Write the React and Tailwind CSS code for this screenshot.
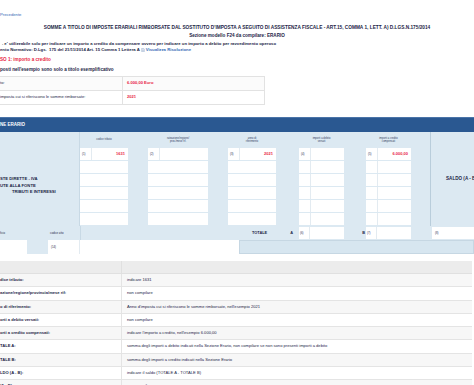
import React from "react";

const navy = "text-[#1d2547]";

// one white column of the Erario grid: header + 6 rows
const EntryCol = ({ width, head, num, value, split }) => (
  <div className={`${width} flex flex-col`}>
    <div className="h-[16px] flex items-center justify-center text-center text-[2.6px] leading-[3.2px] text-[#33405e]">
      {head}
    </div>
    {[0, 1, 2, 3, 4, 5].map((i) => (
      <div key={i} className="h-[13px] bg-white border-b border-[#dce9f2] flex">
        {(i === 0 || split) && (
          <div className="w-[12px] border-r border-[#e3ebf1] flex items-center pl-[2px] text-[2.8px]">
            {i === 0 ? num : ""}
          </div>
        )}
        <div className="flex-1 flex items-center justify-end pr-[3px] text-[4px] font-bold text-[#e8243f]">
          {i === 0 ? value : ""}
        </div>
      </div>
    ))}
  </div>
);

const Gap = ({ width }) => <div className={`${width} h-[94px]`} />;

const legend = [
  ["dice tributo:", "indicare 1631"],
  ["azione/regione/provincia/mese rif:", "non compilare"],
  ["o di riferimento:", "Anno d'imposta cui si riferiscono le somme rimborsate, nell'esempio 2021"],
  ["orti a debito versati:", "non compilare"],
  ["orti a credito compensati:", "indicare l'importo a credito, nell'esempio 6.000,00"],
  ["TALE A:", "somma degli importi a debito indicati nella Sezione Erario, non compilare se non sono presenti importi a debito"],
  ["TALE B:", "somma degli importi a credito indicati nella Sezione Erario"],
  ["LDO (A - B):", "indicare il saldo (TOTALE A - TOTALE B)"],
  ["(A - B):", "non compilare"],
];

export default function App() {
  return (
    <div className={`w-[474px] h-[385px] overflow-hidden bg-white font-['Liberation_Sans',Arial,sans-serif] ${navy}`}>
      {/* top links and titles */}
      <div className="pt-[12px] h-[18px] leading-[6px] text-[4.2px] text-[#3569b5]">Precedente</div>
      <div className="mt-[7px] h-[6px] leading-[6px] text-center text-[4.75px] font-bold whitespace-nowrap">
        SOMME A TITOLO DI IMPOSTE ERARIALI RIMBORSATE DAL SOSTITUTO D'IMPOSTA A SEGUITO DI ASSISTENZA FISCALE - ART.15, COMMA 1, LETT. A) D.LGS.N.175/2014
      </div>
      <div className="mt-[2px] h-[6px] leading-[6px] text-center text-[4.6px] font-bold">
        Sezione modello F24 da compilare: ERARIO
      </div>
      <div className="mt-[2px] h-[6px] leading-[6px] pl-[2px] text-[4.25px] font-bold whitespace-nowrap">
        . e' utilizzabile solo per indicare un importo a credito da compensare ovvero per indicare un importo a debito per ravvedimento operoso
      </div>
      <div className="h-[6px] leading-[6px] text-[4.25px] font-bold whitespace-nowrap flex items-center">
        <span>ento Normativo: D.Lgs.&nbsp; 175 del 21/11/2014 Art. 15 Comma 1 Lettera A</span>
        <svg viewBox="0 0 8 8" className="w-[4px] h-[4px] mx-[1px]">
          <path d="M1.5 .5h3.5l1.5 1.5v5.5h-5z" fill="#fff" stroke="#5b7fae" strokeWidth=".8" />
          <path d="M2.5 3.5h3M2.5 5h3" stroke="#5b7fae" strokeWidth=".6" />
        </svg>
        <span className="text-[#3569b5]">Visualizza Risoluzione</span>
      </div>
      <div className="mt-[4px] h-[6px] leading-[6px] text-[4.6px] font-bold text-[#e8243f]">
        SO 1: importo a credito
      </div>
      <div className="mt-[4px] h-[6px] leading-[6px] text-[4.6px] font-bold">
        posti nell'esempio sono solo a titolo esemplificativo
      </div>

      {/* example values */}
      <div className="mt-[3px] w-[265px] border-t border-r border-[#e2e2e2] text-[4.1px]">
        <div className="h-[14px] flex border-b border-[#e2e2e2] bg-[#fbfbfb]">
          <div className="w-[123px] border-r border-[#e2e2e2] flex items-center">to:</div>
          <div className="flex-1 flex items-center pl-[4px] font-bold text-[#e8243f]">6.000,00 Euro</div>
        </div>
        <div className="h-[14px] flex border-b border-[#e2e2e2]">
          <div className="w-[123px] border-r border-[#e2e2e2] flex items-center">imposta cui si riferiscono le somme rimborsate:</div>
          <div className="flex-1 flex items-center pl-[4px] font-bold text-[#e8243f]">2021</div>
        </div>
      </div>

      {/* sezione erario */}
      <div className="mt-[12px] h-[15px] bg-[#2a5891] border-t border-[#4a74a8] flex items-center text-[4.5px] font-bold text-white">
        NE ERARIO
      </div>
      <div className="bg-[#dce9f2]">
        <div className="flex">
          <div className="w-[80px] h-[94px] border-r border-[#c8d9e5] flex flex-col justify-center pt-[14px] text-[4.2px] leading-[6.5px] font-bold whitespace-nowrap">
            <div>STE DIRETTE - IVA</div>
            <div>UTE ALLA FONTE</div>
            <div className="pl-[12px]">TRIBUTI E INTERESSI</div>
          </div>
          <EntryCol width="w-[48px]" head="codice tributo" num="(1)" value="1631" />
          <Gap width="w-[20px]" />
          <EntryCol width="w-[60px]" head={<>rateazione/regione/<br />prov./mese rif.</>} num="(2)" value="" />
          <Gap width="w-[20px]" />
          <EntryCol width="w-[48px]" head={<>anno di<br />riferimento</>} num="(3)" value="2021" />
          <Gap width="w-[23px]" />
          <EntryCol width="w-[45px]" head={<>importi a debito<br />versati</>} num="(4)" value="" split />
          <Gap width="w-[22px]" />
          <EntryCol width="w-[45px]" head={<>importi a credito<br />compensati</>} num="(5)" value="6.000,00" split />
          <Gap width="w-[19px]" />
          <div className="w-[44px] h-[94px] border-l border-[#b9cddb] flex items-center pl-[15px] text-[4.6px] font-bold whitespace-nowrap overflow-hidden">
            SALDO (A - B)
          </div>
        </div>

        {/* totals */}
        <div className="h-[14px] flex items-center text-[2.8px]">
          <div className="w-[27px]">ficio</div>
          <div className="w-[21px]" />
          <div className="w-[32px] pl-[2px]">codice atto</div>
          <div className="w-[172px] h-[14px] border-l border-[#c8d9e5]" />
          <div className="w-[24px] text-[3.9px] font-bold">TOTALE</div>
          <div className="w-[23px] pr-[6px] text-right text-[3.9px] font-bold">A</div>
          <div className="w-[11px] h-[12px] bg-white border-r border-[#e3ebf1] flex items-center pl-[1px]">(6)</div>
          <div className="w-[34px] h-[12px] bg-white" />
          <div className="w-[22px] pr-[1px] text-right text-[3.9px] font-bold">B</div>
          <div className="w-[11px] h-[12px] bg-white border-r border-[#e3ebf1] flex items-center pl-[1px]">(7)</div>
          <div className="w-[34px] h-[12px] bg-white" />
          <div className="w-[21px]" />
          <div className="w-[42px] h-[12px] bg-white flex items-center pl-[3px]">(8)</div>
        </div>
        <div className="h-[14px] flex text-[2.8px]">
          <div className="w-[27px] bg-white" />
          <div className="w-[21px]" />
          <div className="w-[32px] bg-white border-r border-[#e3ebf1] flex items-center pl-[3px]">(14)</div>
          <div className="w-[159px] bg-white" />
          <div className="flex-1 bg-[#d7e6f0] border border-[#c6d7e3]" />
        </div>
      </div>

      {/* legenda */}
      <div className="mt-[7px] w-[472px] text-[4.1px]">
        <div className="h-[13px] bg-[#ececec] border-b border-[#e0e0e0] flex">
          <div className="w-[122px] border-r border-[#e0e0e0]" />
          <div className="flex-1" />
        </div>
        {legend.map(([label, text], i) => (
          <div
            key={label}
            className={`h-[13.25px] flex border-b border-[#e4e4e4] ${i % 2 === 0 ? "bg-[#f7f7f7]" : "bg-white"}`}
          >
            <div className="w-[122px] border-r border-[#e4e4e4] flex items-center font-bold whitespace-nowrap">{label}</div>
            <div className="flex-1 flex items-center pl-[5px] whitespace-nowrap">{text}</div>
          </div>
        ))}
      </div>
    </div>
  );
}
